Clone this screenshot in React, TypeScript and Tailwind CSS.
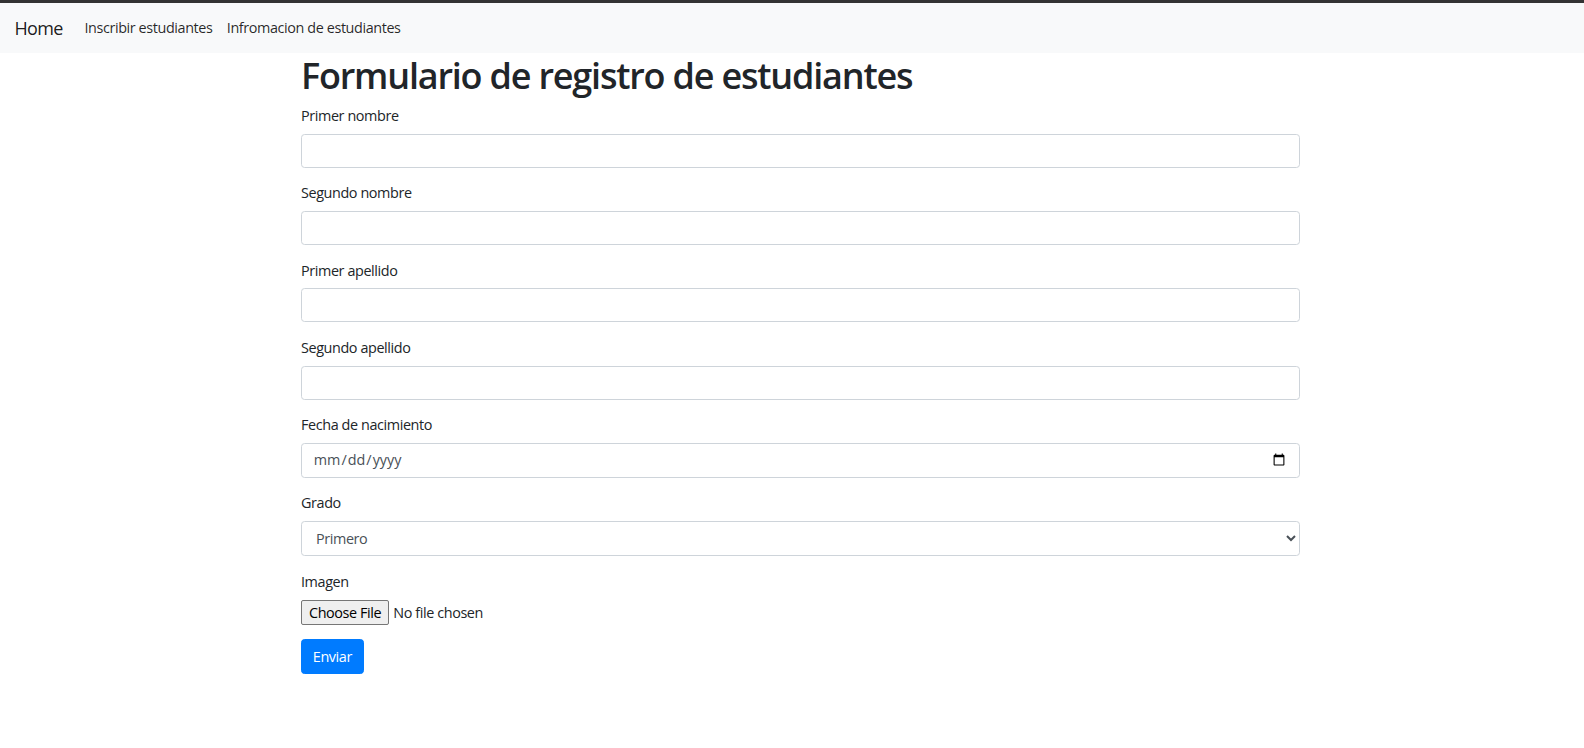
const grados = ['Primero', 'Segundo', 'Tercero', 'Cuarto', 'Quinto', 'Sexto'];

const fields = [
  { id: 'primerNombre', label: 'Primer nombre' },
  { id: 'segundoNombre', label: 'Segundo nombre' },
  { id: 'primerApellido', label: 'Primer apellido' },
  { id: 'segundoApellido', label: 'Segundo apellido' },
];

const inputCls =
  'block w-full h-[34px] px-[10.8px] py-[5.4px] text-[14.4px] leading-[21.6px] text-[#495057] bg-white border border-[#ced4da] rounded-[3.6px] outline-none';

export default function App() {
  return (
    <div
      className="min-h-screen bg-white text-[#212529] text-[14.4px] leading-[21.6px] tracking-[-0.4px]"
      style={{ fontFamily: '"Open Sans", "Noto Sans", sans-serif' }}
    >
      <nav className="h-[53px] border-t-[3px] border-[#333] bg-[#f8f9fa] flex items-center px-[14.4px]">
        <a href="#" className="text-[18px] leading-[27px] text-black/90 mr-[14.4px] tracking-[-0.6px]">
          Home
        </a>
        <div className="flex">
          <a href="#" className="px-[7.2px] text-black/85">
            Inscribir estudiantes
          </a>
          <a href="#" className="px-[7.2px] text-black/85">
            Infromacion de estudiantes
          </a>
        </div>
      </nav>

      <main className="pl-[301px] pt-[1px]">
        <div className="w-[999px]">
          <h1 className="text-[36px] leading-[43.2px] font-semibold tracking-[-1.2px] mb-[8px]">
            Formulario de registro de estudiantes
          </h1>
          <form onSubmit={(e) => e.preventDefault()}>
            {fields.map((f) => (
              <div key={f.id} className="mb-[14.4px]">
                <label htmlFor={f.id} className="block mb-[7.2px]">
                  {f.label}
                </label>
                <input id={f.id} type="text" className={inputCls} />
              </div>
            ))}

            <div className="mb-[14.4px]">
              <label htmlFor="fecha" className="block mb-[7.2px]">
                Fecha de nacimiento
              </label>
              <input id="fecha" type="date" className={inputCls + ' h-[35px] tracking-normal'} />
            </div>

            <div className="mb-[15.4px]">
              <label htmlFor="grado" className="block mb-[7.2px]">
                Grado
              </label>
              <select id="grado" className={inputCls + ' h-[35px] px-[10px]'} defaultValue="Primero">
                {grados.map((g) => (
                  <option key={g}>{g}</option>
                ))}
              </select>
            </div>

            <div className="mb-[14.4px]">
              <label htmlFor="imagen" className="block mb-[7.2px]">
                Imagen
              </label>
              <input
                id="imagen"
                type="file"
                className="block h-[25px] text-[14.4px] leading-[23px] file:h-[25px] file:mr-[4px] file:px-[7px] file:border file:border-[#767676] file:bg-[#efefef] file:text-black file:rounded-[2px] file:tracking-[-0.4px]"
              />
            </div>

            <button
              type="submit"
              className="h-[35px] px-[10.8px] text-white bg-[#007bff] rounded-[3.6px] border border-[#007bff]"
            >
              Enviar
            </button>
          </form>
        </div>
      </main>
    </div>
  );
}
